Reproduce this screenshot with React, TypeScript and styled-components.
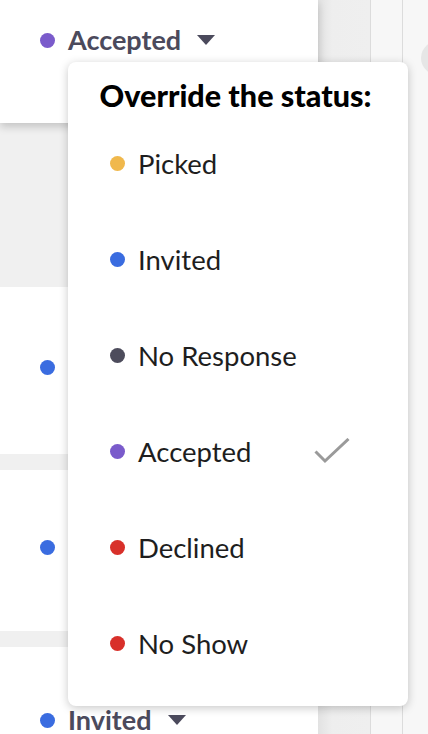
import React from "react";
import styled, { createGlobalStyle } from "styled-components";

const Global = createGlobalStyle`
  html, body { margin: 0; padding: 0; background: #f0f0f0; }
  body { font-family: Lato, "Open Sans", sans-serif; }
`;

const Page = styled.div`
  position: relative;
  width: 428px;
  height: 734px;
  overflow: hidden;
  display: grid;
  grid-template-columns: 318px 1fr;
  background: #f0f0f0;
`;

const LeftCol = styled.div`
  display: flex;
  flex-direction: column;
  position: relative;
  z-index: 1;
`;

const Card = styled.div<{ $h: number; $pt: number; $shadow?: boolean }>`
  height: ${(p) => p.$h}px;
  flex: none;
  background: #fff;
  padding: ${(p) => p.$pt}px 0 0 40px;
  box-sizing: border-box;
  box-shadow: ${(p) => (p.$shadow ? "0 4px 8px rgba(0,0,0,0.18)" : "none")};
  position: relative;
`;

const Gap = styled.div<{ $h: number }>`
  height: ${(p) => p.$h}px;
  flex: none;
  background: #f0f0f0;
`;

const Status = styled.div`
  display: flex;
  align-items: center;
  height: 30px;
`;

const Dot = styled.span<{ $c: string; $size?: number }>`
  width: ${(p) => p.$size ?? 15}px;
  height: ${(p) => p.$size ?? 15}px;
  border-radius: 50%;
  background: ${(p) => p.$c};
  flex: none;
`;

const StatusLabel = styled.span`
  margin-left: 13px;
  font-family: Lato, sans-serif;
  font-weight: 700;
  font-size: 27px;
  color: #4b4a5c;
  line-height: 30px;
`;

const Caret = styled.span`
  margin-left: 16px;
  width: 0;
  height: 0;
  border-left: 9.5px solid transparent;
  border-right: 9.5px solid transparent;
  border-top: 10px solid #4b4a5c;
`;

const RightCol = styled.div`
  display: grid;
  grid-template-columns: 53px 32px 1fr;
`;

const Lane = styled.div<{ $bg: string; $line?: boolean }>`
  background: ${(p) => p.$bg};
  border-right: ${(p) => (p.$line ? "1px solid #dcdcdc" : "none")};
  position: relative;
`;

const ShadeLane = styled(Lane)`
  background: linear-gradient(90deg, #e2e2e2 0px, #eeeeee 14px, #efefef 100%);
`;

const Knob = styled.div`
  position: absolute;
  left: 18px;
  top: 40px;
  width: 40px;
  height: 36px;
  border-radius: 50%;
  background: #e6e6e6;
`;

const Menu = styled.div`
  position: absolute;
  top: 62px;
  left: 68px;
  width: 340px;
  z-index: 5;
  background: #fff;
  border-radius: 8px;
  box-shadow: 0 2px 10px rgba(0, 0, 0, 0.22);
  padding: 14px 0 15px;
  box-sizing: border-box;
`;

const MenuTitle = styled.div`
  height: 39px;
  line-height: 39px;
  text-align: center;
  font-family: Lato, sans-serif;
  font-weight: 900;
  font-size: 30.5px;
  color: #000;
  padding-right: 5px;
  white-space: nowrap;
`;

const Item = styled.div`
  height: 96px;
  display: flex;
  align-items: center;
  padding-left: 42px;
  padding-right: 58px;
`;

const ItemLabel = styled.span`
  margin-left: 13px;
  flex: 1;
  font-family: Lato, sans-serif;
  font-size: 27.5px;
  color: #1e1e1e;
`;

const Check = () => (
  <svg width="36" height="26" viewBox="0 0 36 26">
    <path d="M1.5 13.5 L11 23 L34.5 1" fill="none" stroke="#9a9a9a" strokeWidth="3" />
  </svg>
);

const items = [
  { label: "Picked", color: "#f0b84c" },
  { label: "Invited", color: "#3a6ce0" },
  { label: "No Response", color: "#4d4c5c" },
  { label: "Accepted", color: "#7a5bcb", checked: true },
  { label: "Declined", color: "#d8302a" },
  { label: "No Show", color: "#d8302a" },
];

const StatusRow = ({ label, color }: { label?: string; color: string }) => (
  <Status>
    <Dot $c={color} />
    {label && (
      <>
        <StatusLabel>{label}</StatusLabel>
        <Caret />
      </>
    )}
  </Status>
);

export default function App() {
  return (
    <>
      <Global />
      <Page>
        <LeftCol>
          <Card $h={123} $pt={25} $shadow>
            <StatusRow label="Accepted" color="#7a5bcb" />
          </Card>
          <Gap $h={164} />
          <Card $h={167} $pt={65}>
            <StatusRow color="#3a6ce0" />
          </Card>
          <Gap $h={16} />
          <Card $h={161} $pt={62}>
            <StatusRow color="#3a6ce0" />
          </Card>
          <Gap $h={16} />
          <Card $h={120} $pt={58}>
            <StatusRow label="Invited" color="#3a6ce0" />
          </Card>
        </LeftCol>
        <RightCol>
          <ShadeLane $bg="#eeeeee" $line />
          <Lane $bg="#f7f7f7" $line />
          <Lane $bg="#f7f7f7">
            <Knob />
          </Lane>
        </RightCol>
        <Menu>
          <MenuTitle>Override the status:</MenuTitle>
          {items.map((it) => (
            <Item key={it.label}>
              <Dot $c={it.color} />
              <ItemLabel>{it.label}</ItemLabel>
              {it.checked && <Check />}
            </Item>
          ))}
        </Menu>
      </Page>
    </>
  );
}
